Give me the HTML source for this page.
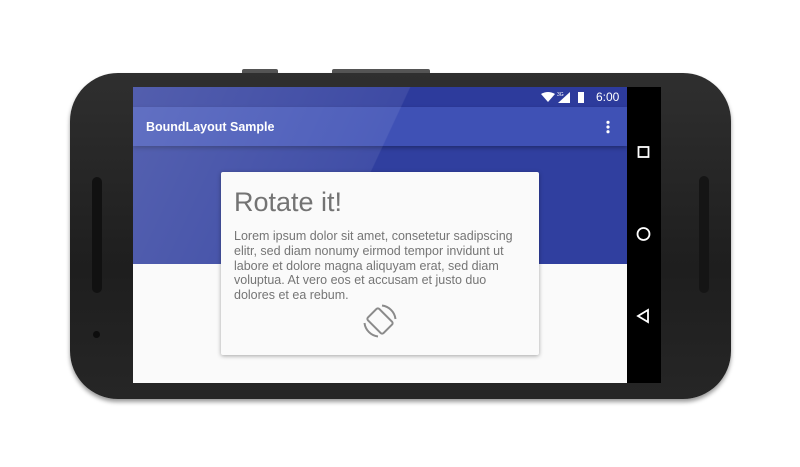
<!DOCTYPE html><html><head><style>
body{margin:0;width:800px;height:467px;background:#fff;position:relative;overflow:hidden;font-family:"Liberation Sans",sans-serif}
div{position:absolute;box-sizing:border-box}
</style></head><body>
<div style="left:242px;top:69px;width:36px;height:6px;background:#555;border-radius:2px"></div>
<div style="left:332px;top:69px;width:98px;height:6px;background:#555;border-radius:2px"></div>
<div style="left:70px;top:73px;width:661px;height:326px;border-radius:48px;background:linear-gradient(180deg,#2f2f2f,#1e1e1e 60%,#262626);box-shadow:0 3px 4px rgba(0,0,0,.4)"></div>
<div style="left:92px;top:177px;width:10px;height:116px;border-radius:5px;background:#111"></div>
<div style="left:699px;top:176px;width:10px;height:117px;border-radius:5px;background:#151515"></div>
<div style="left:93px;top:331px;width:7px;height:7px;border-radius:50%;background:#0d0d0d"></div>
<div style="left:133px;top:87px;width:528px;height:296px;background:#000"></div>
<div style="left:133px;top:87px;width:494px;height:296px;background:#fafafa;overflow:hidden">
 <div style="left:0;top:0;width:494px;height:177px;background:#303f9f"></div>
 <div style="left:0;top:0;width:494px;height:20px;background:#2d3b9c"></div>
 <div style="left:0;top:20px;width:494px;height:39px;background:#3f51b5;box-shadow:0 2px 4px rgba(0,0,0,.3)"></div>
 <div style="left:0;top:0;width:494px;height:177px;background:linear-gradient(115deg,rgba(255,255,255,.18) 0,rgba(255,255,255,.08) 48%,rgba(255,255,255,0) 48.2%)"></div>
 <div style="left:13px;top:33px;color:#fff;font-size:12.5px;font-weight:bold">BoundLayout Sample</div>
 <div style="left:473px;top:33px;width:4px;height:14px;background:radial-gradient(circle,#fff 1.5px,transparent 1.8px) 0 0/4px 4.7px"></div>
 <svg style="position:absolute;left:408px;top:4px" width="50" height="13" viewBox="0 0 50 13"><path d="M0 3 Q7 -1 14 3 L7 11Z" fill="#fff"/><text x="16" y="5" font-size="5" fill="#fff" font-family="Liberation Sans">3G</text><path d="M17 12 L29 1 L29 12Z" fill="#fff"/><rect x="37" y="1" width="6" height="11" fill="#fff"/></svg>
 <div style="left:463px;top:3px;color:#fff;font-size:12px">6:00</div>
 <div style="left:88px;top:85px;width:318px;height:183px;background:#fafafa;border-radius:2px;box-shadow:0 1px 4px rgba(0,0,0,.35)">
  <div style="left:13px;top:15px;font-size:27px;color:#737373">Rotate it!</div>
  <div style="left:13px;top:57px;white-space:nowrap;font-size:12.5px;line-height:14.8px;color:#757575">Lorem ipsum dolor sit amet, consetetur sadipscing<br>elitr, sed diam nonumy eirmod tempor invidunt ut<br>labore et dolore magna aliquyam erat, sed diam<br>voluptua. At vero eos et accusam et justo duo<br>dolores et ea rebum.</div>
  <svg style="position:absolute;left:141px;top:131px" width="36" height="36" viewBox="0 0 36 36" fill="none" stroke="#8a8a8a" stroke-width="2"><rect x="10" y="7" width="16" height="22" rx="2" transform="rotate(-45 18 18)"/><path d="M20 2.5 A15.5 15.5 0 0 1 33.5 16"/><path d="M16 33.5 A15.5 15.5 0 0 1 2.5 20"/></svg>
 </div>
</div>
<svg style="position:absolute;left:633px;top:140px" width="22" height="190" viewBox="0 0 22 190" fill="none" stroke="#fff" stroke-width="1.8"><rect x="5.5" y="7" width="10" height="10"/><circle cx="10.5" cy="94" r="6"/><path d="M15 170 L15 182 L5 176Z"/></svg>
</body></html>
